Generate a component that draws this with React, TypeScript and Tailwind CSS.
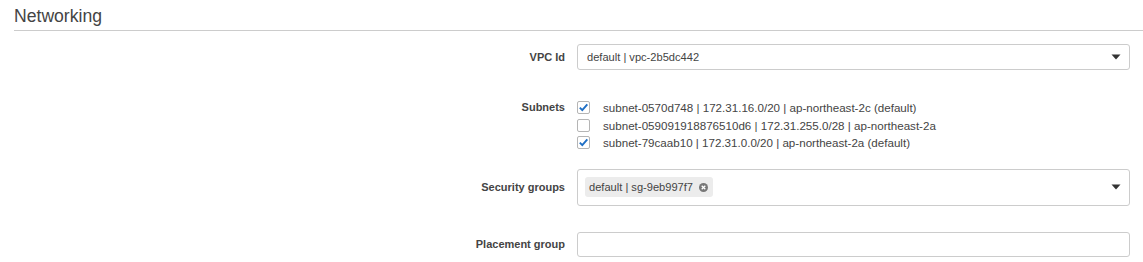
import React from "react";

const Caret = () => (
  <svg width="10" height="6" viewBox="0 0 10 6" className="shrink-0">
    <path d="M0.5 0.5 H9.5 L5 5.5 Z" fill="#333" />
  </svg>
);

const Check = ({ checked }: { checked: boolean }) => (
  <span className="w-[13px] h-[13px] shrink-0 rounded-[2px] border border-[#b5b5b5] bg-white flex items-center justify-center">
    {checked && (
      <svg width="11" height="11" viewBox="0 0 11 11">
        <path d="M1.8 5.6 L4.3 8.1 L9.3 2.4" fill="none" stroke="#1f6fc5" strokeWidth="1.9" />
      </svg>
    )}
  </span>
);

const RemoveIcon = () => (
  <svg width="9" height="9" viewBox="0 0 9 9" className="shrink-0">
    <circle cx="4.5" cy="4.5" r="4.5" fill="#777" />
    <path d="M2.7 2.7 L6.3 6.3 M6.3 2.7 L2.7 6.3" stroke="#fff" strokeWidth="1.3" />
  </svg>
);

const subnets = [
  { label: "subnet-0570d748 | 172.31.16.0/20 | ap-northeast-2c (default)", checked: true },
  { label: "subnet-059091918876510d6 | 172.31.255.0/28 | ap-northeast-2a", checked: false },
  { label: "subnet-79caab10 | 172.31.0.0/20 | ap-northeast-2a (default)", checked: true },
];

const Row = ({ label, children, className = "" }: { label: string; children: React.ReactNode; className?: string }) => (
  <div className={`flex ${className}`}>
    <div className="w-[565px] shrink-0 text-right font-bold text-[11px] text-[#444] self-center">{label}</div>
    <div className="flex-1 ml-[12px] mr-[13px]">{children}</div>
  </div>
);

export default function App() {
  return (
    <div className="w-[1143px] h-[262px] bg-white font-['Liberation_Sans',Arial,sans-serif] text-[#444] overflow-hidden">
      <div className="pl-[14px]">
        <h2 className="text-[17.6px] leading-[22px] pt-[5px] pb-[3px] text-[#444]">Networking</h2>
        <div className="h-px bg-[#cccccc]" />
      </div>

      <Row label="VPC Id" className="mt-[13px]">
        <div className="h-[26px] border border-[#cccccc] rounded-[3px] flex items-center justify-between pl-[9px] pr-[8px] text-[11.1px]">
          <span>default | vpc-2b5dc442</span>
          <Caret />
        </div>
      </Row>

      <div className="flex mt-[29px]">
        <div className="w-[565px] shrink-0 text-right font-bold text-[11px] text-[#444] leading-[17px]">Subnets</div>
        <div className="flex-1 ml-[12px] flex flex-col">
          {subnets.map((s) => (
            <div key={s.label} className="flex items-center h-[17.5px] gap-[13px] text-[11.6px]">
              <Check checked={s.checked} />
              <span>{s.label}</span>
            </div>
          ))}
        </div>
      </div>

      <Row label="Security groups" className="mt-[17px]">
        <div className="h-[37px] border border-[#cccccc] rounded-[3px] flex items-center justify-between pl-[7px] pr-[8px] text-[11.1px]">
          <span className="h-[20px] bg-[#ececec] rounded-[3px] flex items-center gap-[6px] pl-[4px] pr-[5px]">
            <span>default | sg-9eb997f7</span>
            <RemoveIcon />
          </span>
          <Caret />
        </div>
      </Row>

      <Row label="Placement group" className="mt-[26px]">
        <div className="h-[25px] border border-[#cccccc] rounded-[3px]" />
      </Row>
    </div>
  );
}
